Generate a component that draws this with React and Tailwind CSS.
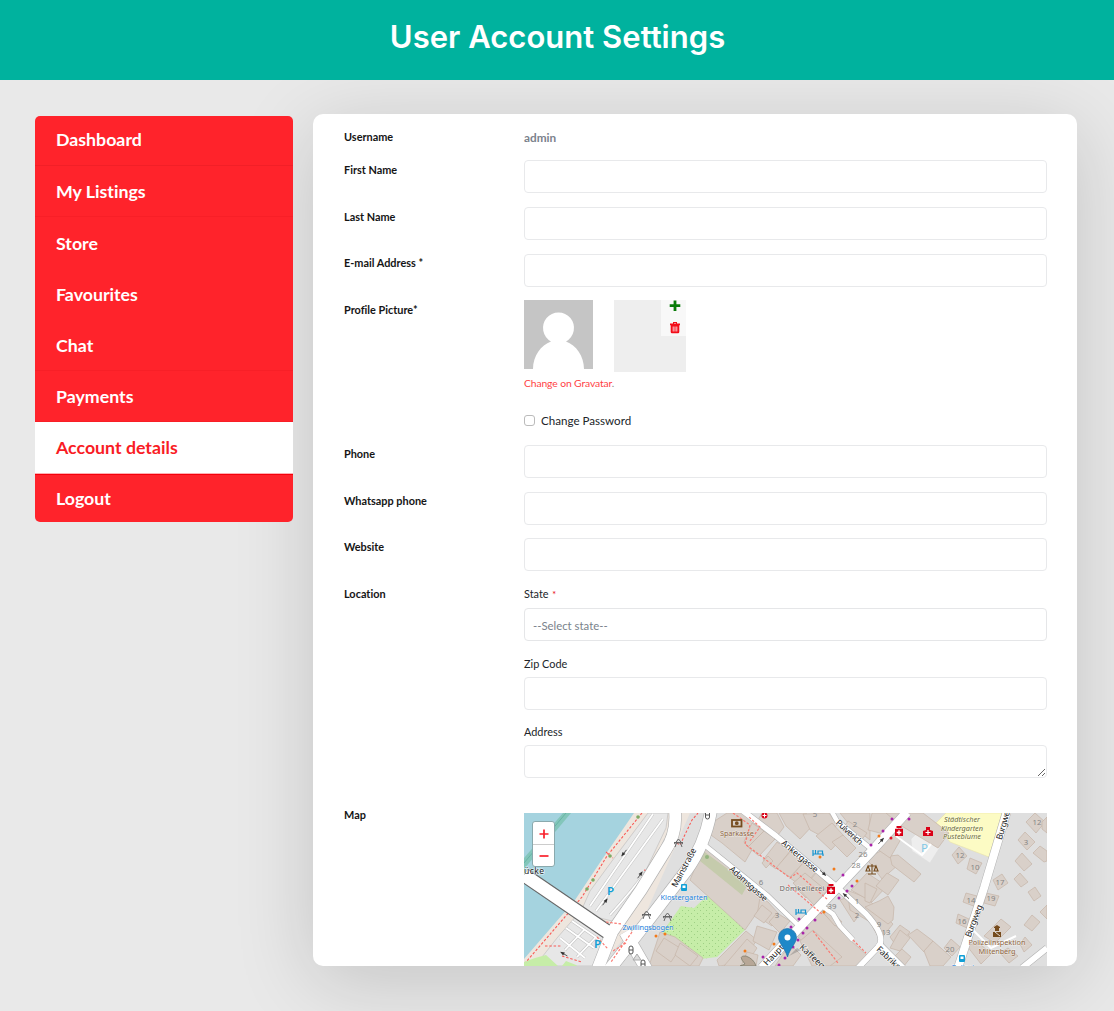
import React from "react";

const NAV = ["Dashboard", "My Listings", "Store", "Favourites", "Chat", "Payments", "Account details", "Logout"];

function Sidebar() {
  return (
    <nav className="relative z-10 mt-[2px] flex h-[406px] w-[258px] shrink-0 flex-col overflow-hidden rounded-[5px] bg-[#ff232b] text-[17.750px] font-bold text-white">
      {NAV.map((item, i) => (
        <a
          key={item}
          className={
            item === "Account details"
              ? "flex h-[51.25px] shrink-0 items-center border-b border-[#ffb0b3] bg-white pl-[21px] text-[#f91c25]"
              : i === 0
                ? "flex h-[50px] shrink-0 items-center border-b border-[#f21f27] pl-[21px] pb-[2px]"
                : i === 7
                  ? "flex h-[51.25px] shrink-0 items-center border-t border-[#f5000c] pl-[21px] pb-[2px]"
                  : i === 2 || i === 3
                    ? "flex h-[51.25px] shrink-0 items-center pl-[21px]"
                    : "flex h-[51.25px] shrink-0 items-center border-b border-[#f81f27] pl-[21px]"
          }
        >
          {item}
        </a>
      ))}
    </nav>
  );
}

function Field({ label, height = "h-[46.700px]", labelTop = "pt-[1.500px]", children }) {
  return (
    <div className={`flex ${height}`}>
      <div className={`w-[180px] shrink-0 text-[10.900px] leading-[16px] font-bold text-[#151515] ${labelTop}`}>{label}</div>
      <div className="w-[523px]">{children}</div>
    </div>
  );
}

const Box = () => <input className="block h-[33px] w-full rounded-[4px] border border-[#e8e9eb] bg-white" />;

/* Building footprints in map units */
const BUILDINGS = [
  "704,846 767,898 745,930 690,880",
  "727,813 746,813 776,838 767,847 757,841 745,862 722,843 708,833 713,822",
  "752,823 764,831 748,847 744,842",
  "764,831 775,839 759,856 748,847",
  "777,842 790,851 776,869 763,860",
  "790,852 804,862 790,877 776,868",
  "804,862 816,872 803,887 790,878",
  "816,873 832,887 820,896 806,885",
  "762,813 777,813 784,827 778,835 758,820",
  "779,813 806,813 814,824 800,839 786,826",
  "803,814 829,813 837,825 825,838 810,830",
  "816,836 832,823 844,836 831,850",
  "832,842 843,835 856,848 847,857",
  "840,813 870,813 870,840 848,823",
  "848,821 867,833 860,842 842,830",
  "872,813 902,813 884,834 868,830",
  "805,874 818,884 806,898 795,887",
  "762,863 768,856 773,861 766,868",
  "793,883 805,873 827,891 814,905",
  "760,897 768,902 779,914 772,926 757,916",
  "777,913 790,921 780,933 769,922",
  "754,916 762,905 772,913 764,923",
  "746,931 757,940 741,963 719,966 717,960",
  "724,966 747,939 757,948 745,966",
  "747,952 758,955 756,966 741,966",
  "757,926 777,932 769,950 753,941",
  "797,936 820,910 850,940 867,955 857,966 827,966",
  "820,909 826,905 842,922 835,926",
  "775,966 790,944 801,955 793,966",
  "800,941 813,930 842,957 830,966 812,966",
  "660,932 675,937 703,958 699,966 649,966",
  "664,938 680,948 671,962 656,951",
  "680,943 698,956 690,966 675,955",
  "840,900 850,896 862,911 854,922",
  "847,890 867,898 893,924 880,940 870,922 850,910",
  "851,890 867,873 887,886 872,902",
  "886,813 923,813 949,833 938,848 900,825",
  "866,858 883,850 898,865 882,879",
  "890,856 898,855 921,874 914,882 892,865",
  "879,836 889,828 901,839 890,858 877,849",
  "876,886 887,873 899,880 888,895",
  "865,883 877,889 870,903 865,901",
  "879,901 888,896 894,907 893,920 888,924 865,907",
  "890,937 900,925 910,932 897,947",
  "890,948 900,930 910,938 900,951",
  "908,935 917,929 933,941 924,952",
  "924,951 933,941 951,957 943,966 930,966",
  "893,958 902,949 911,957 904,966 896,966",
  "944,948 951,939 960,947 952,956",
  "952,855 959,847 967,856 958,864",
  "970,858 982,863 976,874 967,869",
  "966,893 977,896 976,907 963,902",
  "958,914 969,919 967,928 956,923",
  "993,880 1002,874 1008,883 998,890",
  "986,893 999,896 995,906 984,903",
  "1026,822 1035,813 1045,822 1036,833",
  "1018,840 1025,832 1035,842 1027,850",
  "1042,822 1047,817 1047,833 1042,829",
  "1033,853 1040,846 1047,851 1047,861 1044,862",
  "1015,861 1022,853 1032,864 1024,871",
  "1014,879 1020,873 1028,882 1021,887",
  "1028,892 1035,887 1041,896 1034,901",
  "1040,912 1047,905 1047,919",
  "1024,925 1032,915 1040,922 1032,931",
  "984,936 1001,919 1011,927 995,943",
  "1020,944 1025,937 1032,945 1024,952",
  "1000,953 1008,948 1018,956 1009,963",
  "967,946 978,942 991,954 981,964",
];

const NUMBERS = [
  [761, 885, "6"], [777, 918, "3"], [815, 817, "5"], [855, 827, "2"], [863, 857, "26"], [856, 868, "28"], [832, 909, "39"],
  [857, 904, "1"], [857, 918, "2"], [879, 927, "9"], [886, 935, "13"], [960, 858, "12"], [975, 870, "10"], [1000, 885, "17"],
  [971, 903, "14"], [991, 901, "19"], [962, 924, "16"], [950, 952, "20"], [1037, 825, "12"], [1026, 845, "3"],
];

const DOTS = [
  [820, 857, "#f27a1a"], [834, 869, "#f27a1a"], [857, 881, "#f27a1a"], [824, 912, "#f27a1a"], [774, 944, "#f27a1a"], [745, 951, "#f27a1a"],
  [656, 936, "#f27a1a"], [665, 934, "#f27a1a"], [879, 836, "#f27a1a"], [891, 838, "#e11d2a"], [843, 875, "#a923a9"], [852, 886, "#a923a9"],
  [847, 891, "#a923a9"], [839, 898, "#a923a9"], [799, 919, "#a923a9"], [815, 920, "#a923a9"], [791, 927, "#a923a9"], [807, 928, "#a923a9"],
  [803, 933, "#a923a9"], [798, 940, "#a923a9"], [793, 947, "#a923a9"], [785, 958, "#a923a9"], [763, 957, "#a923a9"], [779, 965, "#a923a9"],
  [871, 845, "#a923a9"], [883, 831, "#a923a9"], [892, 819, "#a923a9"], [909, 819, "#a923a9"],
];

const Bed = ({ x, y }) => (
  <g transform={`translate(${x} ${y})`} fill="none" stroke="#1493cf" strokeWidth="1.2">
    <path d="M0 0v6M0 4h10v2M2.5 0v3.5M5 3.5V1h4.5v3" />
  </g>
);

const Arch = ({ x, y }) => (
  <path transform={`translate(${x} ${y})`} d="M1 8 2.500 4H6.500L8 8M0 3.500H9M2 3 4.500 0 7 3M0 5 2 3.500M9 5 7 3.500" fill="none" stroke="#666" strokeWidth="1" />
);

const Arrow = ({ x, y, r }) => (
  <g transform={`translate(${x} ${y}) rotate(${r})`}>
    <path d="M-4 0H3" stroke="#444" strokeWidth=".8" />
    <path d="M0-1.800 4.500 0 0 1.800Z" fill="#333" />
  </g>
);

const Medic = ({ x, y }) => (
  <g transform={`translate(${x} ${y})`}>
    <path d="M-2.500-5H2.500V-3H-2.500ZM-4-2.200H4V5H-4Z" fill="#da0016" />
    <path d="M0-.8V3.800M-2.300 1.500H2.300" stroke="#fff" strokeWidth="1.400" />
  </g>
);

function MapView() {
  return (
    <div className="relative h-[153px] w-[523px] overflow-hidden">
      <svg viewBox="524 813 523 153" width="523" height="153" fontFamily="'Noto Sans', sans-serif">
        <defs>
          <pattern id="grass" width="6" height="6" patternUnits="userSpaceOnUse">
            <path d="M1 1h1v1H1ZM4 4h1v1H4Z" fill="#9fd085" />
          </pattern>
        </defs>
        <path d="M524 813h523v153H524Z" fill="#dfdfdf" />
        {/* riverside */}
        <path d="M524 813H690L646 913 600 966H524Z" fill="#eee6de" />
        <path d="M524 813H634L601 861 575 900 524 959Z" fill="#a5d3df" />
        <path d="M563 813h8L524 869V858Z" fill="#7cc3b4" opacity=".85" />
        <path d="M566 813 524 863" stroke="#68b3a5" strokeWidth="1" />
        <path d="M648 813H668L666 828 648 866 634 896 612 921 596 917 582 909 590 891 612 861Z" fill="#e7e7e7" stroke="#bbb" strokeWidth=".6" />
        <path d="M577 915 602 934 606 944 594 966H535L557 938Z" fill="#e7e7e7" stroke="#bbb" strokeWidth=".6" />
        <path d="M524 962 535 958 546 955 558 966H524ZM566 961 576 965 577 966H562Z" fill="#c6eda8" />
        <g fill="none" stroke="#c4c4c4" strokeWidth="2.800">
          <path d="M653 814 590 906M663 819 596 911M665 840Q655 865 610 915" />
          <path d="M560 938 585 958M566 928 594 948M572 921 601 941M565 950 584 930M577 957 596 937" />
        </g>
        <g fill="none" stroke="#fff" strokeWidth="1.800">
          <path d="M653 814 590 906M663 819 596 911M665 840Q655 865 610 915" />
          <path d="M560 938 585 958M566 928 594 948M572 921 601 941M565 950 584 930M577 957 596 937" />
        </g>
        <path d="M642 813 607 856 582 897 552 932 526 962M606 852 613 858M644 870 656 873M673 841 680 845 692 820 698 813M545 946 561 946M562 956 582 962" fill="none" stroke="#fa5a55" strokeWidth="1.100" strokeDasharray="2.500 1.800" />
        {/* buildings and green areas */}
        <path d="M690 878 745 930 717 957 700 959 661 934 681 906 694 908 710 893Z" fill="#c6eda8" />
        <path d="M690 878 745 930 717 957 700 959 661 934 681 906 694 908 710 893Z" fill="url(#grass)" />
        <path d="M946 813H1002L989 857 950 842 936 823Z" fill="#fcfbc4" stroke="#e9e3a9" strokeWidth=".6" />
        <path d="M911 839 919 831 940 847 930 863 912 851Z" fill="#eee" stroke="#ddd" strokeWidth=".6" />
        <g fill="#d9d0c9" stroke="#c6b4a7" strokeWidth=".7">
          {BUILDINGS.map((p) => <polygon key={p} points={p} />)}
        </g>
        <path d="M702 850 748 884 742 895 700 861Z" fill="#c5cbac" />
        <circle cx="707" cy="857" r="2" fill="#94b580" />
        <path d="M745 964Q737 955 746 956 754 959 756 966H740Z" fill="#b7a797" stroke="#776" strokeWidth=".7" />
        {/* street casings */}
        <g fill="none" stroke="#b0b0b0" strokeLinejoin="round">
          <path d="M675 811Q677 834 665 851L641 890 612 932 598 968" strokeWidth="13" />
          <path d="M711 811Q705 845 686 871L650 918 635 937 609 970" strokeWidth="13" />
          <path d="M524 875 612 935" strokeWidth="15" stroke="#666" />
          <path d="M625 932 647 970" strokeWidth="13" />
          <path d="M762 968 797 930 837 888 870 853 907 812" strokeWidth="10" />
          <path d="M743 811 776 836 837 887 866 914Q886 936 879 946L858 968" strokeWidth="6.500" />
          <path d="M702 843 768 896 800 927M832 812 837 821 870 848M823 907 833 914 840 926 853 940" strokeWidth="5.500" />
          <path d="M1007 811 984 888 958 968" strokeWidth="9" />
          <path d="M878 943 903 968M1022 968 1047 948" strokeWidth="7" />
        </g>
        <g fill="none" stroke="#fff" strokeLinejoin="round">
          <path d="M675 811Q677 834 665 851L641 890 612 932 598 968" strokeWidth="11.800" />
          <path d="M711 811Q705 845 686 871L650 918 635 937 609 970" strokeWidth="11.800" />
          <path d="M524 875 612 935" strokeWidth="12.800" />
          <path d="M625 932 647 970" strokeWidth="11.800" />
          <path d="M762 968 797 930 837 888 870 853 907 812" strokeWidth="9" />
          <path d="M743 811 776 836 837 887 866 914Q886 936 879 946L858 968" strokeWidth="5.500" />
          <path d="M702 843 768 896 800 927M832 812 837 821 870 848M823 907 833 914 840 926 853 940" strokeWidth="4.500" />
          <path d="M1007 811 984 888 958 968" strokeWidth="8" />
          <path d="M878 943 903 968M1022 968 1047 948" strokeWidth="6" />
          <path d="M896 836 922 855 931 844M973 930 991 948 1016 936" strokeWidth="2" />
        </g>
        <path d="M733 813 750 825 745 844 790 878 797 873 827 899M788 885 822 914M813 931 838 963M853 940 866 953M750 841 760 827 749 817M606 922 622 924M597 937 608 949M632 932 611 962M626 943 613 951" fill="none" stroke="#fa7a72" strokeWidth="1.200" strokeDasharray="2.500 1.700" />
        {DOTS.map(([x, y, c]) => <circle key={`${x}-${y}`} cx={x} cy={y} r="1.500" fill={c} />)}
        <g fill="#7dab65"><circle cx="638" cy="817" r="1.800" /><circle cx="610" cy="856" r="1.800" /><circle cx="593" cy="880" r="1.800" /><circle cx="587" cy="889" r="1.800" /></g>
        <Arrow x={624} y={853} r={128} />
        <Arrow x={640} y={875} r={-54} />
        <Arrow x={605} y={902} r={-54} />
        <Arrow x={564} y={954} r={210} />
        <Arrow x={823} y={873} r={42} />
        <Arrow x={846} y={896} r={222} />
        <Arrow x={881} y={841} r={-48} />
        <Arch x={674} y={839} />
        <Arch x={642} y={911} />
        <Arch x={663} y={913} />
        <g fill="#fff" stroke="#555"><rect x="629" y="946" width="4" height="8" rx="2" /><rect x="641" y="960" width="4" height="8" rx="2" /><rect x="705.500" y="811" width="4" height="8" rx="2" /><path d="M629 950h4M641 964h4M705.500 815h4" /><path d="m633 960 4-6 4 6Z" fill="#ddd" stroke="#aaa" /></g>
        {/* labels */}
        <g fill="#858585" fontSize="7.800" textAnchor="middle">
          {NUMBERS.map(([x, y, n]) => <text key={`${x}-${y}`} x={x} y={y}>{n}</text>)}
        </g>
        <g fill="#222" fontSize="8.600" stroke="#fff" strokeWidth="1.200" strokeOpacity=".8" paintOrder="stroke" textAnchor="middle">
          <text x="534" y="873.500" textLength="20">ücke</text>
          <text transform="translate(686.500 869) rotate(-62)" textLength="43">Mainstraße</text>
          <text transform="translate(746.500 886) rotate(42)" textLength="48">Adamsgasse</text>
          <text transform="translate(798 858.500) rotate(40)" textLength="45">Ankergasse</text>
          <text transform="translate(847.500 834.500) rotate(42)" textLength="33">Pulverich</text>
          <text transform="translate(976.500 922) rotate(-69)" textLength="34">Burgweg</text>
          <text transform="translate(1006.500 824) rotate(-74)" textLength="34">Burgweg</text>
          <text transform="translate(767 966) rotate(-46)" textAnchor="start">Haupts</text>
          <text transform="translate(799 948) rotate(43)" textAnchor="start">Kaffeegasse</text>
          <text transform="translate(876 950) rotate(43)" textAnchor="start">Fabrikstraße</text>
        </g>
        <g fontSize="7.400" stroke="#fff" strokeWidth=".8" strokeOpacity=".6" paintOrder="stroke" textAnchor="middle">
          <text x="737" y="836" fill="#8b633d" textLength="34">Sparkasse</text>
          <text x="802" y="891" fill="#67635f" textLength="45">Domkellerei</text>
          <text x="684" y="900" fill="#197edb" textLength="47">Klostergarten</text>
          <text x="648" y="930" fill="#197edb" textLength="51">Zwillingsbogen</text>
          <text x="997" y="945" fill="#8b633d" textLength="57">Polizeiinspektion</text>
          <text x="997" y="954" fill="#8b633d" textLength="37">Miltenberg</text>
          <text x="963" y="970" fill="#197edb">Polizei</text>
          <g fill="#6d6d36" fontStyle="italic">
            <text x="962" y="822" textLength="36">Städtischer</text>
            <text x="962" y="830.500" textLength="42">Kindergarten</text>
            <text x="962" y="839" textLength="38">Pusteblume</text>
          </g>
        </g>
        <g fill="#119fd6" fontWeight="600" fontSize="11.500">
          <text x="607" y="895">P</text><text x="594" y="948">P</text><text x="921" y="852" fill="#82c9e6" fontWeight="400">P</text>
        </g>
        <Bed x={813} y={850} />
        <Bed x={796} y={909} />
        <Medic x={831} y={889} />
        <Medic x={899} y={831} />
        <path d="M923 836V831L926 830V827H930V830L933 831V836Z" fill="#da0016" />
        <path d="M928 830v5M925.500 832.500h5" stroke="#fff" strokeWidth="1.200" />
        <circle cx="764.500" cy="815.500" r="3" fill="#da0016" /><path d="M764.500 813.500v4M762.500 815.500h4" stroke="#fff" strokeWidth="1" />
        <g fill="none" stroke="#754b1d" strokeWidth="1.800"><rect x="732" y="820" width="9.500" height="6.500" /><circle cx="736.800" cy="823.200" r="1" /></g>
        <path d="M872 864v10M868 874h8M868 866h8M868 866l-2 5h4ZM876 866l-2 5h4Z" fill="none" stroke="#754b1d" strokeWidth="1.100" />
        <path d="M994 927 997 925 1000 927V928H999V931H995V928H994ZM993 932H1001V937H993Z" fill="#754b1d" /><path d="m995 932 5 4" stroke="#fff" strokeWidth=".8" />
        <g fill="#119fd6"><rect x="681" y="884" width="6" height="7" rx="1" /><rect x="959" y="955" width="6" height="7" rx="1" /></g>
        <path d="M682.500 885.500h3v2.500h-3ZM960.500 956.500h3v2.500h-3Z" fill="#fff" />
        {/* location pin */}
        <path d="M789 956 797 948 801 950Z" fill="#555" opacity=".3" />
        <path d="M787.500 957C785 948 778.500 943 778.500 937.500A9 9 0 0 1 796.500 937.500C796.500 943 790 948 787.500 957Z" fill="#1e88c8" stroke="#1d6da8" strokeWidth=".7" />
        <circle cx="787.500" cy="937.500" r="3" fill="#fff" />
      </svg>
      <div className="absolute top-[8px] left-[8px] flex h-[46px] w-[23px] flex-col rounded-[3px] border border-[#8aa9ad] bg-white">
        <div className="flex h-[23px] items-center justify-center border-b border-[#ccc] pt-[2px]">
          <svg width="10" height="10"><path d="M5 .5v9M.5 5h9" stroke="#f9202b" strokeWidth="1.700" /></svg>
        </div>
        <div className="flex h-[21px] items-center justify-center pt-[2px]">
          <svg width="10" height="10"><path d="M.5 5h9" stroke="#f9202b" strokeWidth="1.700" /></svg>
        </div>
      </div>
    </div>
  );
}

function ProfilePicture() {
  return (
    <>
      <div className="flex h-[75px] gap-[21px]">
        <svg width="69" height="69" viewBox="0 0 69 69">
          <path d="M0 0h69v69H0Z" fill="#c5c5c5" />
          <path d="M9 69C9 56 17 45 27 41.500A15.500 15.500 0 1 1 42 41.500C52 45 60 56 60 69Z" fill="#fff" />
        </svg>
        <div className="flex h-[72px] w-[72px] justify-end bg-[#eee]">
          <div className="flex h-[36px] w-[25px] flex-col items-center bg-[#f8f8f8] pl-[2px]">
            <svg width="12" height="36" viewBox="0 0 12 36">
              <path d="M6 .5v10.500M.7 5.700H11.300" stroke="#087c08" strokeWidth="2.800" />
              <path d="M1 23.500H11V25.300H1ZM4 22h4v2H7v-1H5v1H4ZM1.700 25H10.300V32Q10.300 33.300 9 33.300H3Q1.700 33.300 1.700 32Z" fill="#f30d19" />
              <path d="M4.200 26.500v5M6 26.500v5M7.800 26.500v5" stroke="#fff" strokeWidth=".8" />
            </svg>
          </div>
        </div>
      </div>
      <div className="h-[34.500px] text-[10.350px] leading-[16px] tracking-[-0.120px] text-[#888]"><a className="text-[#ff3f45]">Change on Gravatar</a>.</div>
      <label className="flex h-[21px] items-center gap-[6px] text-[11.600px]">
        <span className="h-[11px] w-[11px] rounded-[3px] border border-[#bbb] bg-white" />
        Change Password
      </label>
    </>
  );
}

export default function App() {
  return (
    <div className="h-[1011px] w-[1114px] overflow-hidden bg-[#e9e9e9] font-['Lato',sans-serif] text-[#212529] [font-variant-ligatures:none]">
      <header className="relative z-10 flex h-[80px] justify-center bg-[#00b29e] pt-[14px] pl-[1px] font-['Inter',sans-serif] text-[31px] leading-[46px] font-semibold tracking-[0.020px] text-white">
        <h1>User Account Settings</h1>
      </header>
      <main className="flex gap-[20px] pt-[34px] pl-[35px]">
        <Sidebar />
        <section className="h-[852px] w-[764px] overflow-hidden rounded-[10px] bg-white pl-[31px] shadow-[0_15px_80px_rgba(0,0,0,0.160)]">
          <div className="h-[13px]" />
          <Field label="Username" height="h-[33.400px]" labelTop="pt-[2px]"><div className="pt-[3px] text-[11.800px] leading-[16px] font-bold text-[#7b828c]">admin</div></Field>
          <Field label="First Name"><Box /></Field>
          <Field label="Last Name"><Box /></Field>
          <Field label="E-mail Address *"><Box /></Field>
          <Field label="Profile Picture*" height="h-[144.400px]"><ProfilePicture /></Field>
          <Field label="Phone" labelTop="pt-[1px]"><Box /></Field>
          <Field label="Whatsapp phone" labelTop="pt-[1px]"><Box /></Field>
          <Field label="Website" labelTop="pt-[1px]"><Box /></Field>
          <Field label="Location" height="h-[228px]" labelTop="pt-[1px]">
            <div className="h-[23.500px] text-[10.900px] leading-[17px]">State <span className="ml-[1px] text-[9px] text-red-600">*</span></div>
            <div className="flex h-[33px] items-center rounded-[4px] border border-[#e5e6e8] px-[8px] pt-[1px] text-[11.350px] text-[#7a828b]">--Select state--</div>
            <div className="mt-[14.500px] h-[21px] text-[10.900px] leading-[16px]">Zip Code</div>
            <Box />
            <div className="mt-[14.500px] h-[20.800px] text-[10.900px] leading-[16px]">Address</div>
            <textarea className="block h-[33px] w-full resize rounded-[4px] border border-[#e8e9eb]" />
          </Field>
          <Field label="Map" height="h-[153px]" labelTop="-mt-[6px]"><MapView /></Field>
        </section>
      </main>
    </div>
  );
}
